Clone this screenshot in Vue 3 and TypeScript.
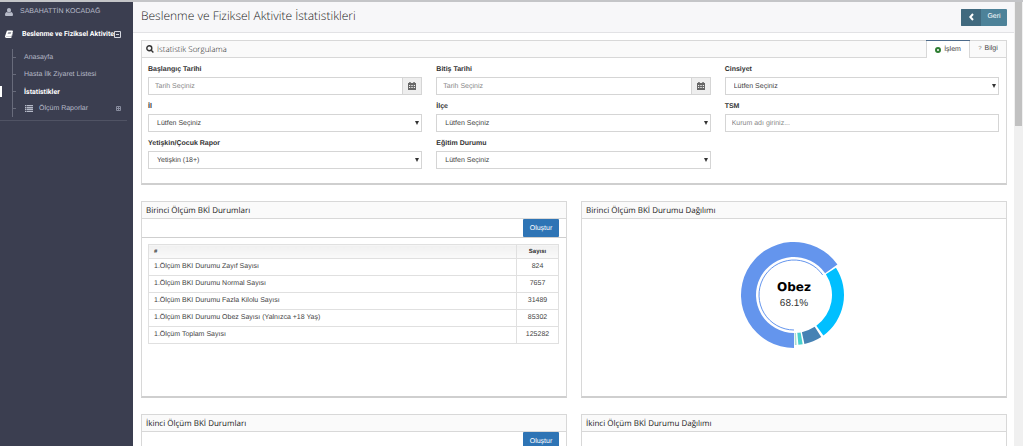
<script setup lang="ts">
import { ref } from 'vue'

interface Field {
  id: string
  label: string
  kind: 'date' | 'select' | 'text'
  hint: string
}

interface Slice {
  color: string
  from: number
  to: number
  radius: number
}

const fields: Field[] = [
  { id: 'start', label: 'Başlangıç Tarihi', kind: 'date', hint: 'Tarih Seçiniz' },
  { id: 'end', label: 'Bitiş Tarihi', kind: 'date', hint: 'Tarih Seçiniz' },
  { id: 'gender', label: 'Cinsiyet', kind: 'select', hint: 'Lütfen Seçiniz' },
  { id: 'province', label: 'İl', kind: 'select', hint: 'Lütfen Seçiniz' },
  { id: 'district', label: 'İlçe', kind: 'select', hint: 'Lütfen Seçiniz' },
  { id: 'tsm', label: 'TSM', kind: 'text', hint: 'Kurum adı giriniz...' },
  { id: 'report', label: 'Yetişkin/Çocuk Rapor', kind: 'select', hint: 'Yetişkin (18+)' },
  { id: 'education', label: 'Eğitim Durumu', kind: 'select', hint: 'Lütfen Seçiniz' },
]

const rows = [
  { name: '1.Ölçüm BKI Durumu Zayıf Sayısı', count: 824 },
  { name: '1.Ölçüm BKI Durumu Normal Sayısı', count: 7657 },
  { name: '1.Ölçüm BKI Durumu Fazla Kilolu Sayısı', count: 31489 },
  { name: '1.Ölçüm BKI Durumu Obez Sayısı (Yalnızca +18 Yaş)', count: 85302 },
  { name: '1.Ölçüm Toplam Sayısı', count: 125282 },
]

const slices: Slice[] = [
  { color: '#6495ed', from: 180, to: 415, radius: 53 },
  { color: '#00bfff', from: 57, to: 144, radius: 50 },
  { color: '#4682b4', from: 147, to: 168, radius: 50 },
  { color: '#48d1cc', from: 170, to: 175, radius: 50 },
  { color: '#a9dfd2', from: 177, to: 179, radius: 50 },
]

const tab = ref('islem')

function point(radius: number, angle: number): string {
  const a = (angle * Math.PI) / 180
  return `${(radius * Math.sin(a)).toFixed(2)} ${(-radius * Math.cos(a)).toFixed(2)}`
}

function ring(s: Slice): string {
  const inner = 38
  const large = s.to - s.from > 180 ? 1 : 0
  return (
    `M${point(s.radius, s.from)}A${s.radius} ${s.radius} 0 ${large} 1 ${point(s.radius, s.to)}` +
    `L${point(inner, s.to)}A${inner} ${inner} 0 ${large} 0 ${point(inner, s.from)}Z`
  )
}

const highlight = `M${point(35, 180)}A35 35 0 1 1 ${point(35, 415)}`
</script>

<template>
  <div class="app">
    <aside class="sidebar">
      <div class="user">
        <svg class="icon" viewBox="0 0 16 16" aria-hidden="true">
          <path d="M8 0C5.600 0 4 1.800 4 4.300S5.600 9 8 9s4-2.200 4-4.700S10.400 0 8 0zM4 8C1.500 8.500 0 10.500 0 13.500 0 15 1 16 2.500 16h11c1.500 0 2.500-1 2.500-2.500C16 10.500 14.500 8.500 12 8c-1 1.500-2.400 2.200-4 2.200S5 9.500 4 8z" />
        </svg>
        <span>SABAHATTİN KOCADAĞ</span>
      </div>
      <nav>
        <a class="root" href="#">
          <svg class="icon" viewBox="0 0 16 16" aria-hidden="true">
            <path fill-rule="evenodd" d="M5.500 1h8.800c1.200 0 2 .9 1.600 2L13 12c-.3.800-1 1.300-1.800 1.300H2.800c-.8 0-.8.900 0 .9H12c.5 0 .8-.3 1-.8l2.300-7.500.5.500-2.500 8c-.3.900-1 1.600-2 1.600H2.500C.8 16-.4 14.300.1 12.700L3.200 2.800C3.500 1.700 4.400 1 5.500 1zm1 3-.3 1h6l.3-1zm-.8 2.500-.3 1h6l.3-1z" />
          </svg>
          <span>Beslenme ve Fiziksel Aktivite</span>
          <svg class="toggle" viewBox="0 0 7 7" aria-hidden="true"><path d="M.5.5h6v6h-6zM2 3.500h3" /></svg>
        </a>
        <ul class="tree">
          <li><a href="#">Anasayfa</a></li>
          <li><a href="#">Hasta İlk Ziyaret Listesi</a></li>
          <li class="current"><a href="#" aria-current="page">İstatistikler</a></li>
          <li>
            <a href="#">
              <svg class="list-icon" viewBox="0 0 8 7" aria-hidden="true">
                <path d="M0 0h1.500v1.300H0zM2 0h6v1.300H2zM0 1.900h1.500v1.300H0zM2 1.900h6v1.300H2zM0 3.800h1.500v1.300H0zM2 3.800h6v1.300H2zM0 5.700h1.500V7H0zM2 5.700h6V7H2z" />
              </svg>
              <span>Ölçüm Raporlar</span>
              <svg class="expand" viewBox="0 0 5 5" aria-hidden="true"><path d="M.5.5h4v4h-4zM1 2.500h3M2.500 1v3" /></svg>
            </a>
          </li>
        </ul>
      </nav>
    </aside>

    <main class="page">
      <header class="title-bar">
        <h1>Beslenme ve Fiziksel Aktivite İstatistikleri</h1>
        <button type="button" class="back">
          <span class="back-icon">
            <svg viewBox="0 0 5 8" aria-hidden="true"><path d="M4 1 1.300 4 4 7" /></svg>
          </span>
          <span class="back-text">Geri</span>
        </button>
      </header>

      <div class="content">
        <section class="panel query">
          <div class="panel-head">
            <svg class="search" viewBox="0 0 8 8" aria-hidden="true">
              <circle cx="3.300" cy="3.300" r="2.500" /><path d="m5.200 5.200 2.200 2.200" />
            </svg>
            <h2>İstatistik Sorgulama</h2>
            <div class="tabs" role="tablist">
              <button type="button" role="tab" :aria-selected="tab === 'islem'" :class="{ on: tab === 'islem' }" @click="tab = 'islem'">
                <svg class="dot" viewBox="0 0 6 6" aria-hidden="true"><circle cx="3" cy="3" r="2" /></svg>
                İşlem
              </button>
              <button type="button" role="tab" :aria-selected="tab === 'bilgi'" :class="{ on: tab === 'bilgi' }" @click="tab = 'bilgi'">
                <span class="ask">?</span>
                Bilgi
              </button>
            </div>
          </div>
          <form class="fields" @submit.prevent>
            <div v-for="f in fields" :key="f.id" class="field">
              <label :for="f.id">{{ f.label }}</label>
              <div v-if="f.kind === 'date'" class="date">
                <input :id="f.id" type="text" :placeholder="f.hint" />
                <button type="button" :aria-label="f.label">
                  <svg viewBox="0 0 8 8" aria-hidden="true">
                    <path fill-rule="evenodd" d="M0 1h1.200V0h1.500v1h2.600V0h1.500v1H8v7H0zM1 3v1h1.200V3zm2.300 0v1h1.400V3zM5.800 3v1H7V3zM1 5v1h1.200V5zm2.300 0v1h1.400V5zm2.500 0v1H7V5z" />
                  </svg>
                </button>
              </div>
              <div v-else-if="f.kind === 'select'" class="choice">
                <select :id="f.id"><option>{{ f.hint }}</option></select>
                <svg viewBox="0 0 4 4" aria-hidden="true"><path d="M0 0h4L2 4z" /></svg>
              </div>
              <input v-else :id="f.id" type="text" :placeholder="f.hint" />
            </div>
          </form>
        </section>

        <div class="pair">
          <section class="panel tall">
            <div class="panel-head"><h2>Birinci Ölçüm BKİ Durumları</h2></div>
            <div class="toolbar"><button type="button">Oluştur</button></div>
            <table>
              <thead>
                <tr><th scope="col">#</th><th scope="col" class="count">Sayısı</th></tr>
              </thead>
              <tbody>
                <tr v-for="r in rows" :key="r.name">
                  <td>{{ r.name }}</td>
                  <td class="count">{{ r.count }}</td>
                </tr>
              </tbody>
            </table>
          </section>
          <section class="panel tall">
            <div class="panel-head"><h2>Birinci Ölçüm BKİ Durumu Dağılımı</h2></div>
            <div class="chart">
              <svg viewBox="-54 -54 108 108" role="img" aria-label="Obez 68.1%">
                <path v-for="s in slices" :key="s.color" :d="ring(s)" :fill="s.color" />
                <path :d="highlight" class="highlight" />
                <text class="name" y="-4">Obez</text>
                <text class="share" y="11">68.1%</text>
              </svg>
            </div>
          </section>
        </div>

        <div class="pair">
          <section class="panel tall">
            <div class="panel-head"><h2>İkinci Ölçüm BKİ Durumları</h2></div>
            <div class="toolbar"><button type="button">Oluştur</button></div>
          </section>
          <section class="panel tall">
            <div class="panel-head"><h2>İkinci Ölçüm BKİ Durumu Dağılımı</h2></div>
          </section>
        </div>
      </div>
    </main>
    <div class="scrollbar"><div class="thumb"></div></div>
  </div>
</template>

<style>
body {
  margin: 0;
  overflow: hidden;
}
</style>

<style scoped>
* {
  box-sizing: border-box;
}
.app {
  display: flex;
  height: 100vh;
  overflow: hidden;
  border-top: 2px solid #c4c5c8;
  background: #fff;
  color: #444;
  font: 7px/10px "Liberation Sans", Arial, sans-serif;
  text-rendering: geometricPrecision;
}
button,
input,
select {
  font: inherit;
  color: inherit;
  margin: 0;
  border-radius: 0;
  text-rendering: inherit;
}
h1,
h2 {
  margin: 0;
  font-family: "Open Sans", sans-serif;
  font-weight: 300;
}

.sidebar {
  flex: 0 0 133px;
  background: #3b3e50;
  color: #b6bac8;
}
.sidebar a {
  color: inherit;
  text-decoration: none;
}
.icon {
  width: 8px;
  height: 8px;
  fill: currentColor;
}
.user,
.root {
  display: flex;
  align-items: center;
  padding-left: 5px;
}
.user {
  gap: 7px;
  height: 20px;
}
.sidebar .root {
  gap: 9px;
  height: 24px;
  color: #fff;
  font-family: Roboto, sans-serif;
  font-weight: 700;
}
.root span {
  white-space: nowrap;
}
.toggle {
  width: 7px;
  height: 7px;
  margin-left: -9px;
  fill: none;
  stroke: #d5d7e0;
}
.tree {
  list-style: none;
  margin: 0 6px 0 0;
  padding: 3px 0;
  border-bottom: 1px solid #505364;
}
.tree li {
  display: flex;
  align-items: center;
  position: relative;
  height: 17px;
  margin-left: 12px;
  border-left: 1px solid #686b7b;
}
.tree li::before {
  content: "";
  width: 3px;
  height: 1px;
  margin-right: 8px;
  background: #686b7b;
}
.tree li a {
  flex: 1;
  display: flex;
  align-items: center;
}
.tree .current {
  color: #fff;
  font-family: Roboto, sans-serif;
  font-weight: 700;
}
.tree .current::after {
  content: "";
  position: absolute;
  left: -13px;
  width: 2px;
  height: 11px;
  background: #fff;
}
.list-icon {
  width: 8px;
  height: 7px;
  margin: 0 6px 0 1px;
  fill: currentColor;
}
.expand {
  width: 5px;
  height: 5px;
  margin: 0 6px 0 auto;
  fill: none;
  stroke: #888c9e;
}

.page {
  flex: 1;
  min-width: 0;
}
.title-bar {
  display: flex;
  align-items: center;
  justify-content: space-between;
  height: 31px;
  padding: 0 7px 0 8px;
  border-bottom: 1px solid #e2e2e5;
  background: #f7f7f9;
}
h1 {
  padding-bottom: 3px;
  color: #222;
  font-size: 12px;
  line-height: 16px;
}
.back {
  display: flex;
  height: 17px;
  padding: 0;
  border: 0;
  border-radius: 1px;
  overflow: hidden;
  background: #4d8299;
  color: #fff;
}
.back span {
  display: flex;
  align-items: center;
  justify-content: center;
  height: 17px;
}
.back-icon {
  width: 20px;
  background: #40697e;
}
.back-text {
  width: 26px;
}
.back svg {
  width: 5px;
  height: 8px;
  fill: none;
  stroke: #fff;
  stroke-width: 2;
}
.content {
  display: grid;
  gap: 16px;
  padding: 7px 7px 0 8px;
}
.panel {
  border: 1px solid #d8d8d8;
  border-bottom: 2px solid #cfcfcf;
  background: #fff;
}
.panel-head {
  display: flex;
  align-items: center;
  height: 17px;
  padding-left: 4px;
  border-bottom: 1px solid #d8d8d8;
  background: #fafafa;
}
h2 {
  padding-top: 2px;
  color: #222;
  font-size: 8px;
  line-height: 12px;
}
.tall h2 {
  font-weight: 400;
}
.search {
  width: 8px;
  height: 8px;
  margin-right: 3px;
  fill: none;
  stroke: #333;
  stroke-width: 1.400;
}
.tabs {
  display: flex;
  align-self: stretch;
  margin-left: auto;
}
.tabs button {
  display: flex;
  align-items: center;
  justify-content: center;
  gap: 3px;
  width: 36px;
  height: 16px;
  padding: 0;
  border: 0;
  background: none;
  color: #444;
}
.tabs .on {
  width: 44px;
  height: 17px;
  border: solid #d8d8d8;
  border-width: 0 1px;
  background: #fff;
  box-shadow: 0 -1px #4c6a8a;
}
.dot {
  width: 6px;
  height: 6px;
  fill: #fff;
  stroke: #2e7d32;
  stroke-width: 2;
}
.ask {
  color: #888;
  font-size: 6px;
}
.fields {
  display: grid;
  grid-template-columns: repeat(3, 1fr);
  gap: 7px 14px;
  padding: 7px 7px 14px 6px;
}
.field {
  display: grid;
  gap: 2px;
}
label {
  color: #333;
  font-weight: 700;
}
input,
select {
  width: 100%;
  min-width: 0;
  height: 18px;
  padding: 0 6px;
  border: 1px solid #d5d5d5;
  background: #fff;
  color: #444;
  appearance: none;
}
select {
  padding: 2px 8px 0;
}
input::placeholder {
  color: #888;
  opacity: 1;
}
.date,
.choice {
  display: flex;
  position: relative;
}
.date button {
  flex: 0 0 19px;
  display: flex;
  align-items: center;
  justify-content: center;
  padding: 0;
  border: 1px solid #d5d5d5;
  border-left: 0;
  background: #eee;
}
.date svg {
  width: 8px;
  height: 8px;
  fill: #666;
}
.choice svg {
  position: absolute;
  top: 7px;
  right: 3px;
  width: 4px;
  height: 4px;
  fill: #333;
  pointer-events: none;
}
.pair {
  display: grid;
  grid-template-columns: 1fr 1fr;
  gap: 14px;
}
.tall {
  min-height: 197px;
}
.toolbar {
  display: flex;
  justify-content: flex-end;
  padding: 0 7px;
  border-bottom: 1px solid #cfcfcf;
}
.toolbar button {
  width: 36px;
  height: 18px;
  padding: 2px 0 0;
  border: 0;
  border-radius: 1px;
  background: #2e74b5;
  color: #fff;
}
table {
  width: calc(100% - 13px);
  margin: 6px 7px 0 6px;
  border-collapse: collapse;
}
th,
td {
  height: 17px;
  padding: 0 5px 1px;
  border: 1px solid #e0e0e0;
  text-align: left;
}
th {
  height: 14px;
  padding-bottom: 0;
  background: linear-gradient(#f0f0f0, #fafafa);
  color: #333;
  font-size: 6px;
}
.count {
  width: 42px;
  padding-left: 0;
  padding-right: 0;
  text-align: center;
}
.chart {
  display: flex;
  justify-content: center;
  padding: 22px 0 0;
}
.chart svg {
  width: 108px;
  height: 108px;
}
.highlight {
  fill: none;
  stroke: #6495ed;
}
text {
  text-anchor: middle;
  fill: #000;
}
.name {
  font: 700 12px "DejaVu Sans", sans-serif;
}
.share {
  fill: #333;
  font: 10px "Liberation Sans", sans-serif;
}
.scrollbar {
  flex: 0 0 9px;
  background: #f0f0f0;
}
.thumb {
  width: 7px;
  height: 28%;
  margin: 0 1px;
  background: #c1c1c1;
}
</style>
